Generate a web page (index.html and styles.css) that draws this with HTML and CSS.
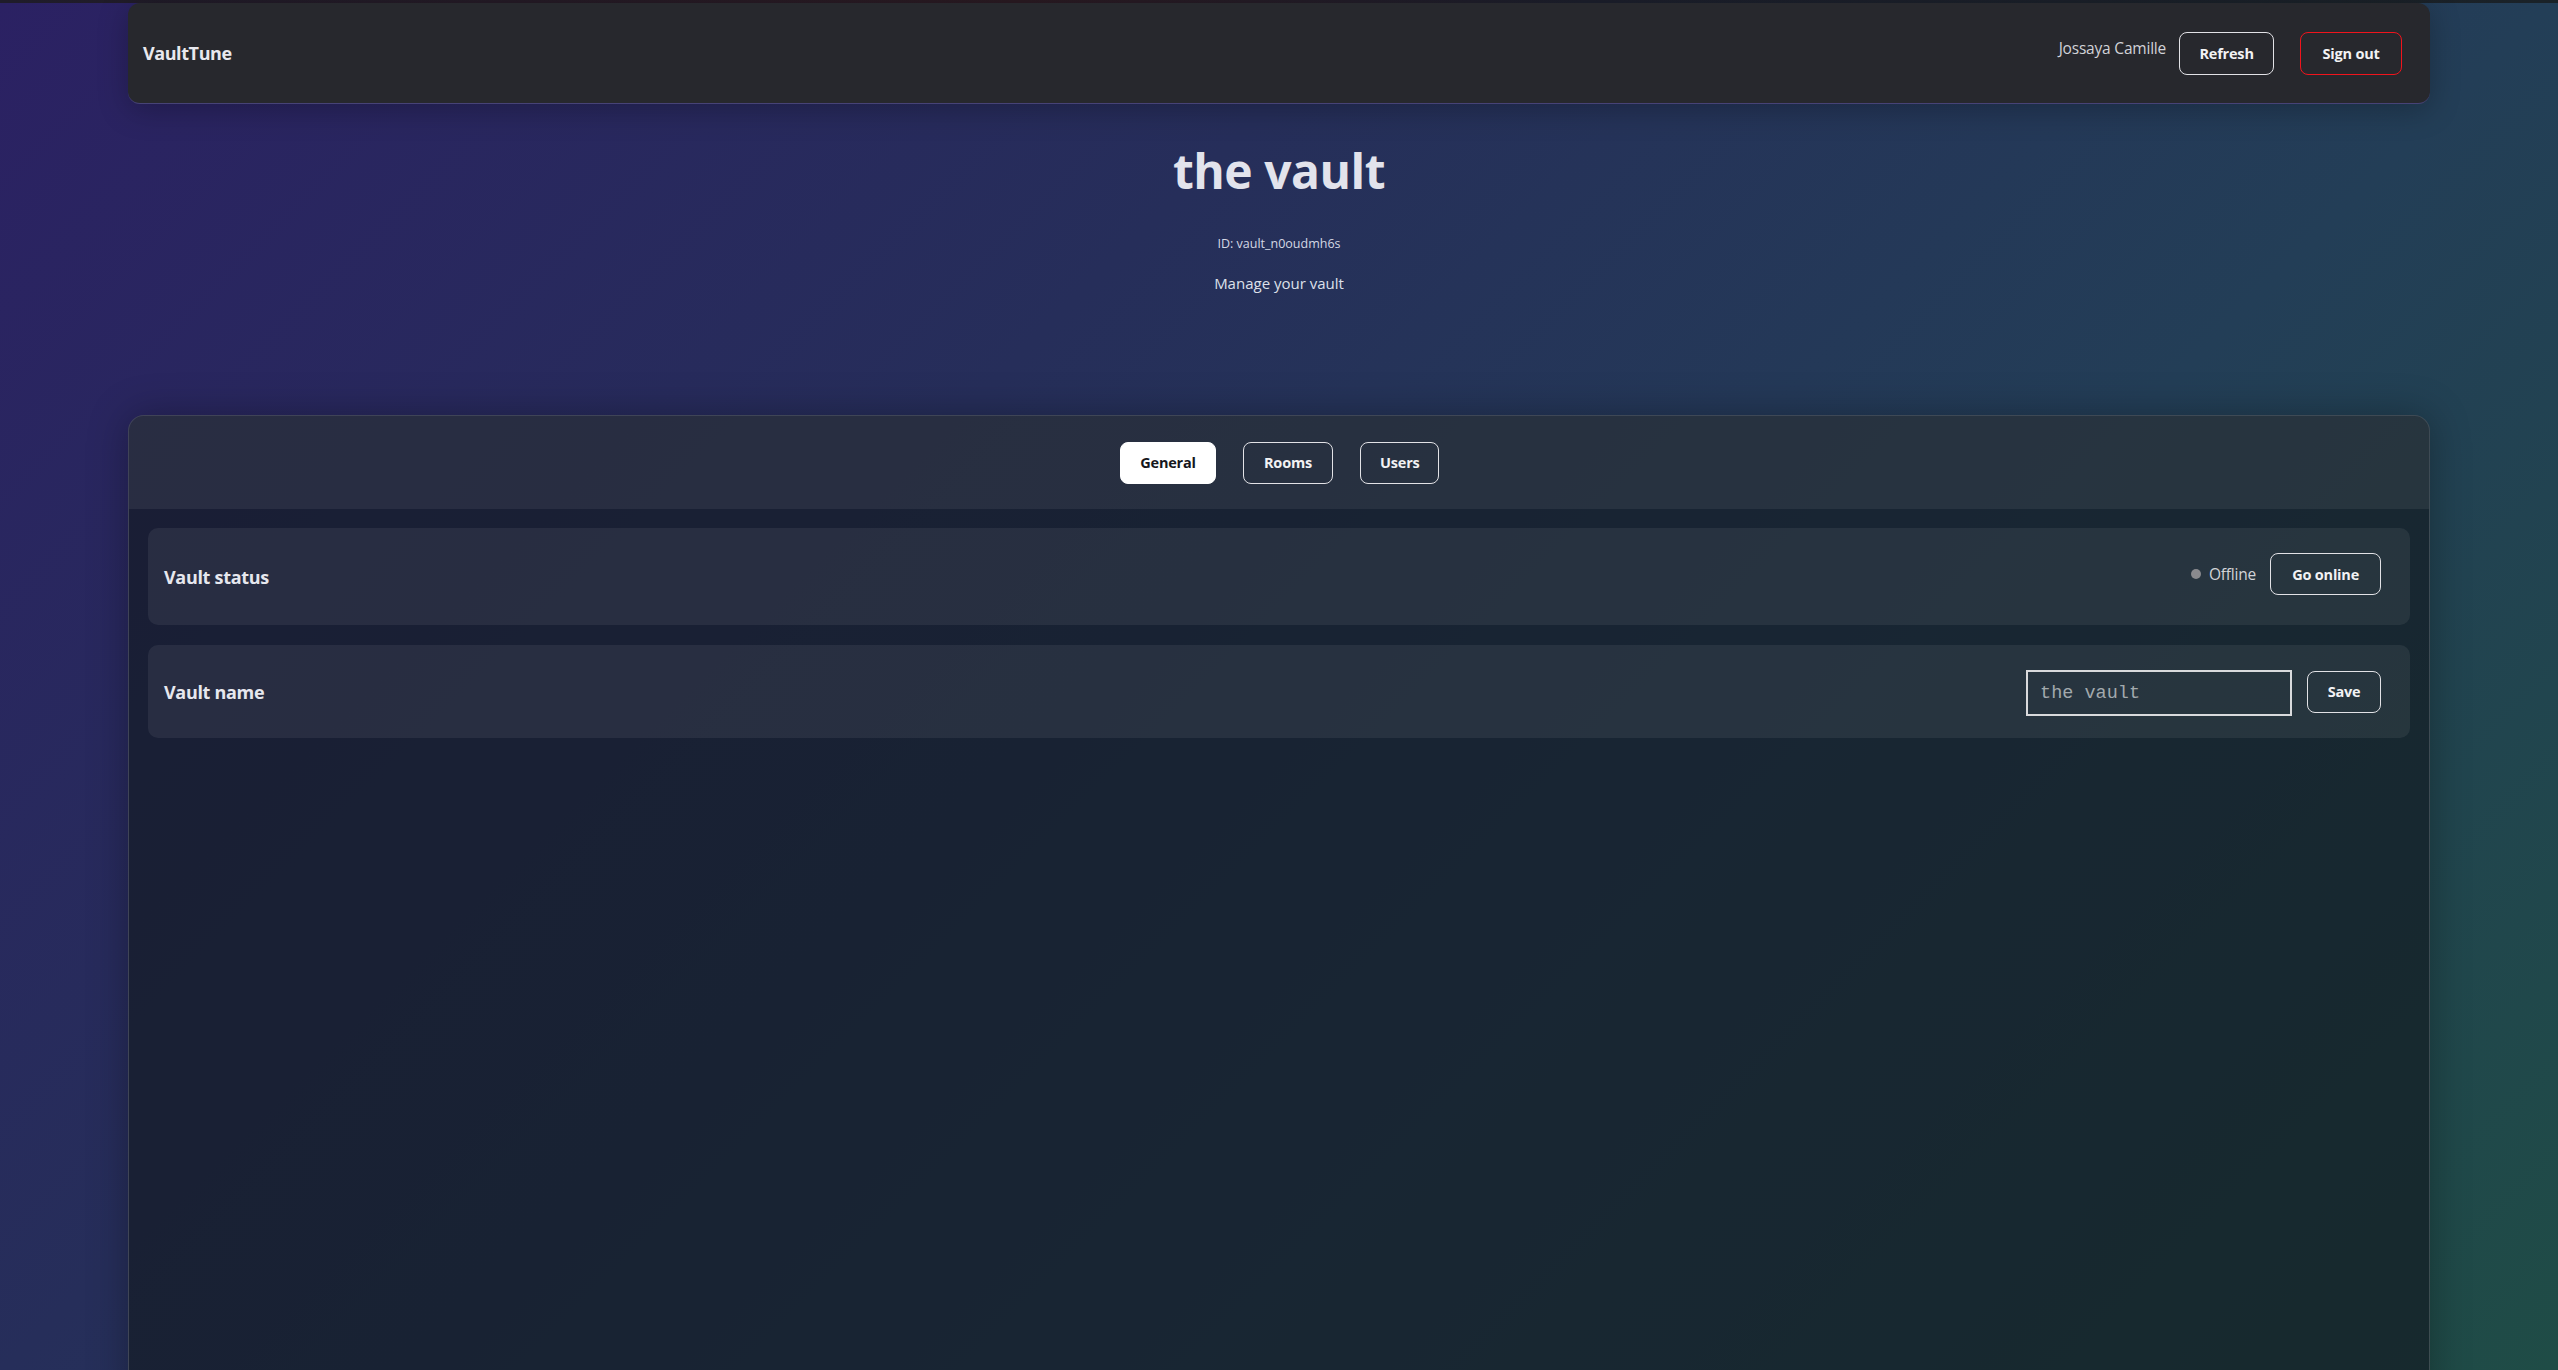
FILE: index.html
```html
<!DOCTYPE html>
<html lang="en">
<head>
<meta charset="utf-8">
<title>VaultTune</title>
<link rel="stylesheet" href="styles.css">
</head>
<body>
<div class="topline"></div>
<div class="page">
  <header class="navbar">
    <div class="brand">VaultTune</div>
    <div class="nav-right">
      <span class="user-name">Jossaya Camille</span>
      <button class="btn btn-refresh">Refresh</button>
      <button class="btn btn-danger">Sign out</button>
    </div>
  </header>

  <section class="hero">
    <h1 class="hero-title">the vault</h1>
    <p class="hero-id">ID: vault_n0oudmh6s</p>
    <p class="hero-sub">Manage your vault</p>
  </section>

  <main class="card">
    <nav class="tabs">
      <button class="btn tab tab-general tab-active">General</button>
      <button class="btn tab tab-rooms">Rooms</button>
      <button class="btn tab tab-users">Users</button>
    </nav>
    <div class="card-body">
      <div class="row row-status">
        <h3 class="row-label">Vault status</h3>
        <div class="row-actions">
          <span class="status-dot"></span>
          <span class="status-text">Offline</span>
          <button class="btn btn-go">Go online</button>
        </div>
      </div>
      <div class="row row-name">
        <h3 class="row-label">Vault name</h3>
        <div class="row-actions">
          <input class="name-input" type="text" value="the vault">
          <button class="btn btn-save">Save</button>
        </div>
      </div>
    </div>
  </main>
</div>
</body>
</html>
```

FILE: styles.css
```css
* { box-sizing: border-box; }

html, body {
  margin: 0;
  padding: 0;
}

body {
  min-height: 100vh;
  font-family: "Open Sans", "Noto Sans", sans-serif;
  color: #e3e4ec;
  background: linear-gradient(135deg, #2b2163 0%, #262e5a 35%, #233e57 65%, #1f4c46 100%);
  background-attachment: fixed;
  overflow: hidden;
}

.topline {
  height: 3px;
  background: linear-gradient(90deg, #1f1c2a 0%, #2a1a22 40%, #1c1f2c 62%, #1a2228 100%);
}

.page {
  width: 90%;
  margin: 0 auto;
}

.navbar {
  height: 101px;
  display: flex;
  align-items: center;
  justify-content: space-between;
  padding: 0 28px 0 15px;
  background: #27282d;
  border-radius: 12px;
  border-bottom: 1px solid rgba(110, 100, 210, 0.45);
  box-shadow: 0 6px 30px rgba(0, 0, 0, 0.25);
}

.brand {
  font-size: 18px;
  font-weight: 700;
  color: #e8e8ee;
  letter-spacing: -0.4px;
}

.nav-right {
  display: flex;
  align-items: center;
}

.user-name {
  font-size: 15.5px;
  color: #d2d3d8;
  margin-right: 13px;
  padding-bottom: 11px;
  letter-spacing: -0.2px;
}

.btn {
  font-family: inherit;
  font-size: 14.5px;
  font-weight: 700;
  color: #f2f2f4;
  background: transparent;
  border: 1px solid #e2e2e6;
  border-radius: 8px;
  height: 43px;
  padding: 0 19px;
  cursor: pointer;
  letter-spacing: -0.2px;
}

.btn-refresh {
  width: 95px;
}

.btn-danger {
  border-color: #f0141c;
  margin-left: 26px;
  width: 102px;
}

.hero {
  text-align: center;
  padding-top: 37px;
  height: 311px;
}

.hero-title {
  margin: 0;
  font-size: 48px;
  line-height: 60px;
  font-weight: 700;
  color: #e2e3ec;
  letter-spacing: -0.5px;
}

.hero-id {
  margin: 35px 0 0;
  font-size: 12.5px;
  line-height: 16px;
  color: #d4d8e4;
}

.hero-sub {
  margin: 20px 0 0;
  font-size: 15px;
  line-height: 22px;
  color: #dde0ea;
}

.card {
  height: 1000px;
  background: rgba(19, 26, 34, 0.68);
  border: 1px solid rgba(255, 255, 255, 0.17);
  border-radius: 16px;
  box-shadow: 0 0 40px rgba(0, 0, 0, 0.3);
  overflow: hidden;
}

.tabs {
  height: 93px;
  display: flex;
  align-items: center;
  justify-content: center;
  gap: 27px;
  background: rgba(255, 255, 255, 0.065);
  padding-left: 1px;
}

.tab {
  height: 42px;
  padding: 0 19px;
}

.tab-general { width: 96px; }
.tab-rooms { width: 90px; }
.tab-users { width: 79px; }

.tab-active {
  background: #ffffff;
  color: #16171c;
  border-color: #ffffff;
}

.card-body {
  display: flex;
  flex-direction: column;
  gap: 20px;
  padding: 19px 19px;
}

.row {
  display: flex;
  align-items: center;
  justify-content: space-between;
  padding: 0 29px 0 16px;
  background: rgba(255, 255, 255, 0.065);
  border-radius: 10px;
}

.row-status { height: 97px; }
.row-name { height: 93px; }

.row-label {
  margin: 0;
  font-size: 18px;
  font-weight: 700;
  color: #e6e7ee;
  letter-spacing: -0.3px;
}

.row-actions {
  display: flex;
  align-items: center;
}

.row-status .row-actions {
  margin-top: -5px;
}

.status-dot {
  width: 10px;
  height: 10px;
  border-radius: 50%;
  background: #8a8a8e;
  margin-right: 8px;
}

.status-text {
  font-size: 15.5px;
  color: #d2d4d8;
  margin-right: 14px;
  letter-spacing: -0.2px;
}

.btn-go {
  height: 42px;
  width: 111px;
  padding: 0;
}

.name-input {
  width: 266px;
  height: 46px;
  border: 2px solid #d9dadc;
  background: transparent;
  font-family: "Liberation Mono", "Courier New", monospace;
  font-size: 18.5px;
  color: #a2a9ad;
  padding: 0 12px;
  margin-right: 15px;
  outline: none;
  border-radius: 0;
  margin-top: 3px;
}

.btn-save {
  height: 42px;
  width: 74px;
  padding: 0;
}
```
